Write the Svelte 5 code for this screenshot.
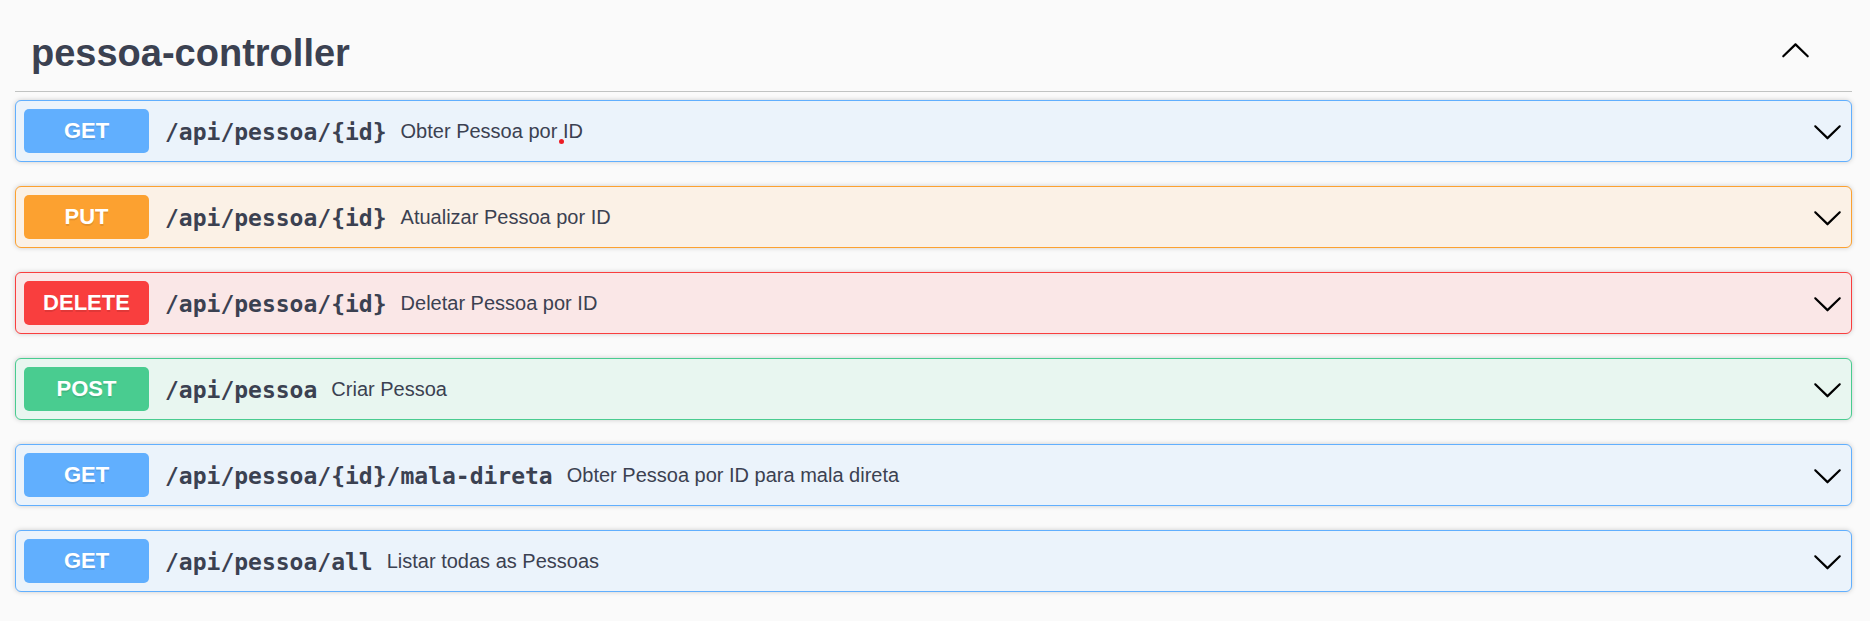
<script lang="ts">
  type Operation = { method: string; path: string; lead: string; tail?: string; marked?: boolean };

  const operations: Operation[] = [
    { method: 'GET', path: '/api/pessoa/{id}', lead: 'Obter Pessoa por ', tail: 'ID', marked: true },
    { method: 'PUT', path: '/api/pessoa/{id}', lead: 'Atualizar Pessoa por ID' },
    { method: 'DELETE', path: '/api/pessoa/{id}', lead: 'Deletar Pessoa por ID' },
    { method: 'POST', path: '/api/pessoa', lead: 'Criar Pessoa' },
    { method: 'GET', path: '/api/pessoa/{id}/mala-direta', lead: 'Obter Pessoa por ID para mala direta' },
    { method: 'GET', path: '/api/pessoa/all', lead: 'Listar todas as Pessoas' }
  ];

  let open = $state(true);
</script>

{#snippet chevron(up: boolean)}
  <svg class="chevron" viewBox="0 0 20 20" aria-hidden="true">
    {#if up}
      <path d="M17.418 14.908c.272.281.709.281.979 0s.271-.712 0-.969l-7.908-7.83c-.27-.268-.707-.268-.979 0l-7.908 7.83c-.27.268-.27.701 0 .969s.709.268.979 0L10 7.767l7.418 7.141z" />
    {:else}
      <path d="M17.418 6.109c.272-.268.709-.268.979 0s.271.701 0 .969l-7.908 7.83c-.27.268-.707.268-.979 0l-7.908-7.83c-.27-.268-.27-.701 0-.969s.709-.268.979 0L10 13.25l7.418-7.141z" />
    {/if}
  </svg>
{/snippet}

<main>
  <header>
    <h3>pessoa-controller</h3>
    <button class="toggle" aria-expanded={open} aria-label="pessoa-controller" onclick={() => (open = !open)}>
      {@render chevron(open)}
    </button>
  </header>

  {#if open}
    <div class="operations">
      {#each operations as op}
        <div class="operation {op.method.toLowerCase()}">
          <button class="summary">
            <span class="method">{op.method}</span>
            <span class="path">{op.path}</span>
            <span class="description">{op.lead}{#if op.marked}<i class="mark"></i>{/if}{op.tail ?? ''}</span>
          </button>
          <button class="expand" aria-label={`${op.method} ${op.path}`}>
            {@render chevron(false)}
          </button>
        </div>
      {/each}
    </div>
  {/if}
</main>

<style>
  :global(body) {
    margin: 0;
    background: #fafafa;
  }

  main {
    padding: 12px 18px 24px 15px;
    color: #3b4151;
    font-family: "Liberation Sans", Arial, sans-serif;
  }

  header {
    display: flex;
    align-items: center;
    padding: 16px;
    border-bottom: 1px solid #c1c3c2;
  }

  h3 {
    flex: 1;
    margin: 0;
    padding-top: 3px;
    font-size: 38px;
    line-height: 44px;
    font-weight: 700;
  }

  button {
    margin: 0;
    padding: 0;
    border: 0;
    background: none;
    color: inherit;
    font: inherit;
    cursor: pointer;
  }

  .toggle {
    padding: 0 25px 4px;
  }

  .toggle,
  .expand {
    display: flex;
  }

  .chevron {
    width: 31px;
    height: 31px;
    fill: #000;
  }

  .operations {
    display: flex;
    flex-direction: column;
    gap: 24px;
    padding-top: 8px;
  }

  .operation {
    --tone: #61affe;
    display: flex;
    align-items: center;
    padding: 8px;
    border: 1px solid var(--tone);
    border-radius: 6px;
    background: #ebf3fb;
    box-shadow: 0 0 5px rgba(0, 0, 0, 0.19);
  }

  .put {
    --tone: #fca130;
    background: #fbf1e6;
  }

  .delete {
    --tone: #f93e3e;
    background: #fae7e7;
  }

  .post {
    --tone: #49cc90;
    background: #e8f6f0;
  }

  .summary {
    display: flex;
    flex: 1;
    align-items: center;
    text-align: left;
  }

  .method {
    box-sizing: border-box;
    min-width: 125px;
    padding: 10px 0;
    border-radius: 5px;
    background: var(--tone);
    color: #fff;
    font-size: 22px;
    line-height: 24px;
    font-weight: 700;
    text-align: center;
    text-shadow: 0 2px 0 rgba(0, 0, 0, 0.1);
  }

  .path {
    padding: 2px 14px 0 16px;
    font-family: "DejaVu Sans Mono", monospace;
    font-size: 23px;
    line-height: 28px;
    font-weight: 700;
  }

  .description {
    font-size: 20px;
    line-height: 24px;
  }

  .mark {
    position: relative;
  }

  .mark::after {
    content: "";
    position: absolute;
    right: -1px;
    bottom: -2px;
    width: 5px;
    height: 5px;
    border-radius: 50%;
    background: #ed1c24;
  }
</style>
